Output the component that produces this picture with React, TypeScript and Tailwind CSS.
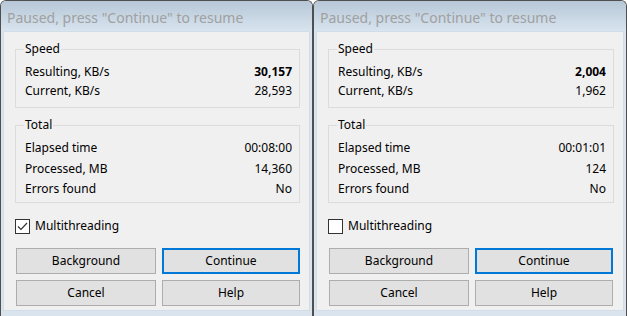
import React from "react";

type Stats = {
  checked: boolean;
  resulting: string;
  current: string;
  elapsed: string;
  processed: string;
  errors: string;
};

function Row({ label, value, bold, tall }: { label: string; value: string; bold?: boolean; tall?: boolean }) {
  return (
    <div className={"flex items-center justify-between pl-[9px] pr-[7px] " + (tall ? "h-[20.5px]" : "h-[19.5px]")}>
      <span>{label}</span>
      <span className={bold ? "font-bold" : ""}>{value}</span>
    </div>
  );
}

function Group({ title, children, className }: { title: string; children: React.ReactNode; className?: string }) {
  return (
    <fieldset className={"border border-[#dcdcdc] " + (className ?? "")}>
      <legend className="ml-[8px] px-[1px] h-[16px] leading-[16px]">{title}</legend>
      {children}
    </fieldset>
  );
}

function Button({ children, focused }: { children: React.ReactNode; focused?: boolean }) {
  return (
    <button
      className={
        "h-[26px] bg-[#e1e1e1] text-black " +
        (focused ? "border-2 border-[#0078d7]" : "border border-[#adadad]")
      }
    >
      {children}
    </button>
  );
}

function Dialog({ stats, className }: { stats: Stats; className?: string }) {
  return (
    <div
      className={
        "flex h-[316px] flex-col rounded-t-[6px] border-l border-r border-t border-[#4f4f4f] bg-[#d9e4ee] " +
        (className ?? "")
      }
    >
      <div className="flex h-[30px] shrink-0 items-center rounded-t-[5px] bg-gradient-to-b from-[#b7c7d7] to-[#d8e4ef] pl-[6px] pt-[2px] text-[14px] text-[#a0a0a0]">
        Paused, press "Continue" to resume
      </div>
      <div className="mx-[2px] flex h-[280px] flex-col border border-[#d3dde6] bg-[#f0f0f0] pl-[11px] pr-[9px] pt-[9px] text-[12px] text-black">
        <Group title="Speed" className="pb-[6px]">
          <div className="pt-[5px]">
            <Row label="Resulting, KB/s" value={stats.resulting} bold />
            <Row label="Current, KB/s" value={stats.current} />
          </div>
        </Group>
        <Group title="Total" className="mt-[9px] pb-[2px]">
          <div className="pt-[5px]">
            <Row label="Elapsed time" value={stats.elapsed} tall />
            <Row label="Processed, MB" value={stats.processed} tall />
            <Row label="Errors found" value={stats.errors} tall />
          </div>
        </Group>
        <label className="mt-[16px] flex h-[15px] items-center gap-[5px]">
          <span className="flex h-[15px] w-[15px] items-center justify-center border border-[#333333] bg-white">
            {stats.checked && (
              <svg width="11" height="9" viewBox="0 0 11 9">
                <polyline points="1,4.5 4,7.5 10,1" fill="none" stroke="#333" strokeWidth="1.2" />
              </svg>
            )}
          </span>
          <span>Multithreading</span>
        </label>
        <div className="ml-px mt-[14px] grid grid-cols-[140px_138px] gap-[6px]">
          <Button>Background</Button>
          <Button focused>Continue</Button>
          <Button>Cancel</Button>
          <Button>Help</Button>
        </div>
      </div>
    </div>
  );
}

export default function App() {
  return (
    <div
      className="flex h-[316px] w-[627px] overflow-hidden bg-white"
      style={{ fontFamily: '"Noto Sans", "Open Sans", sans-serif' }}
    >
      <Dialog
        className="w-[313px]"
        stats={{ checked: true, resulting: "30,157", current: "28,593", elapsed: "00:08:00", processed: "14,360", errors: "No" }}
      />
      <Dialog
        className="w-[314px]"
        stats={{ checked: false, resulting: "2,004", current: "1,962", elapsed: "00:01:01", processed: "124", errors: "No" }}
      />
    </div>
  );
}
